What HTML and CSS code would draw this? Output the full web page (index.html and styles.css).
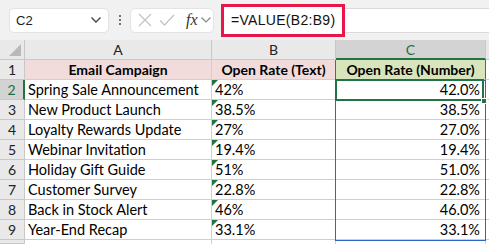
FILE: index.html
```html
<!DOCTYPE html>
<html>
<head>
<meta charset="utf-8">
<link rel="stylesheet" href="styles.css">
</head>
<body>
<div class="app">
  <div class="toolbar">
    <div class="namebox">
      <span class="nb-text">C2</span>
      <svg class="chev" width="12" height="8" viewBox="0 0 12 8"><path d="M1.5 1.5 L6 6 L10.5 1.5" fill="none" stroke="#444" stroke-width="1.4"/></svg>
    </div>
    <div class="dots"><span></span><span></span><span></span></div>
    <div class="fxbox">
      <svg width="16" height="16" viewBox="0 0 16 16"><path d="M2 2 L14 14 M14 2 L2 14" stroke="#c4c4c4" stroke-width="1.3" fill="none"/></svg>
      <svg width="18" height="16" viewBox="0 0 18 16"><path d="M2 8.5 L6.5 13 L16 3" stroke="#c4c4c4" stroke-width="1.3" fill="none"/></svg>
      <span class="fx">fx</span>
      <svg width="12" height="8" viewBox="0 0 12 8"><path d="M1.5 1.5 L6 6 L10.5 1.5" fill="none" stroke="#888" stroke-width="1.2"/></svg>
    </div>
    <div class="formula">
      <div class="formula-hl">=VALUE(B2:B9)</div>
    </div>
  </div>
  <div class="sheet">
    <div class="grid">
      <div class="corner"><span class="tri"></span></div>
      <div class="colh">A</div>
      <div class="colh">B</div>
      <div class="colh sel">C</div>
      <div class="colh last"></div>

      <div class="rowh">1</div>
      <div class="cell hd pink">Email Campaign</div>
      <div class="cell hd pink gr">Open Rate (Text)</div>
      <div class="cell hd green gr">Open Rate (Number)</div>
      <div class="cell last"></div>

      <div class="rowh sel">2</div>
      <div class="cell">Spring Sale Announcement</div>
      <div class="cell txt">42%</div>
      <div class="cell num">42.0%</div>
      <div class="cell last"></div>

      <div class="rowh">3</div>
      <div class="cell">New Product Launch</div>
      <div class="cell txt">38.5%</div>
      <div class="cell num">38.5%</div>
      <div class="cell last"></div>

      <div class="rowh">4</div>
      <div class="cell">Loyalty Rewards Update</div>
      <div class="cell txt">27%</div>
      <div class="cell num">27.0%</div>
      <div class="cell last"></div>

      <div class="rowh">5</div>
      <div class="cell">Webinar Invitation</div>
      <div class="cell txt">19.4%</div>
      <div class="cell num">19.4%</div>
      <div class="cell last"></div>

      <div class="rowh">6</div>
      <div class="cell">Holiday Gift Guide</div>
      <div class="cell txt">51%</div>
      <div class="cell num">51.0%</div>
      <div class="cell last"></div>

      <div class="rowh">7</div>
      <div class="cell">Customer Survey</div>
      <div class="cell txt">22.8%</div>
      <div class="cell num">22.8%</div>
      <div class="cell last"></div>

      <div class="rowh">8</div>
      <div class="cell">Back in Stock Alert</div>
      <div class="cell txt">46%</div>
      <div class="cell num">46.0%</div>
      <div class="cell last"></div>

      <div class="rowh">9</div>
      <div class="cell">Year-End Recap</div>
      <div class="cell txt">33.1%</div>
      <div class="cell num">33.1%</div>
      <div class="cell last"></div>

      <div class="rowh"></div>
      <div class="cell blank"></div>
      <div class="cell blank"></div>
      <div class="cell blank"></div>
      <div class="cell last blank"></div>
    </div>
    <div class="spill"></div>
    <div class="active"><span class="handle"></span></div>
  </div>
</div>
</body>
</html>
```

FILE: styles.css
```css
* { box-sizing: border-box; }
html, body { margin: 0; padding: 0; }
body {
  width: 489px;
  height: 244px;
  overflow: hidden;
  background: #ffffff;
  font-family: "Lato", "Open Sans", sans-serif;
}
.app { display: flex; flex-direction: column; }

.toolbar {
  height: 40px;
  background: #f1f1f1;
  display: flex;
  align-items: center;
  padding-left: 9px;
}
.namebox {
  width: 100px;
  height: 25px;
  background: #fff;
  border: 1px solid #e3e3e3;
  border-radius: 5px;
  display: flex;
  align-items: center;
  justify-content: space-between;
  padding: 0 6px 0 6px;
  font-family: "Liberation Sans", sans-serif;
  font-size: 13px;
  color: #222;
}
.dots {
  width: 21px;
  display: flex;
  flex-direction: column;
  align-items: center;
  gap: 2px;
}
.dots span { width: 2px; height: 2px; background: #444; border-radius: 1px; }
.fxbox {
  width: 84px;
  height: 25px;
  background: #fff;
  border: 1px solid #e3e3e3;
  border-radius: 5px;
  display: flex;
  align-items: center;
  gap: 5px;
  padding-left: 6px;
}
.fx {
  font-family: "Liberation Serif", serif;
  font-style: italic;
  font-size: 16px;
  color: #333;
  margin-left: 5px;
  margin-right: -3px;
}
.formula {
  flex: 1;
  height: 25px;
  margin-left: 9px;
  background: #fff;
  border-top: 1px solid #dadada;
  border-bottom: 1px solid #dadada;
  position: relative;
}
.formula-hl {
  position: absolute;
  left: -2px;
  top: -5px;
  width: 124px;
  height: 33px;
  border: 3px solid #e8174a;
  font-family: "Liberation Sans", sans-serif;
  font-size: 14px;
  letter-spacing: 0.3px;
  color: #111;
  padding: 5px 0 0 7px;
  background: #fff;
}

.sheet { position: relative; }
.grid {
  display: grid;
  grid-template-columns: 25px 187px 124px 150px 3px;
  grid-template-rows: 20px repeat(9, 20px) 4px;
}
.corner {
  background: #e9e9e9;
  border-right: 1px solid #c8c8c8;
  border-bottom: 1px solid #c8c8c8;
  position: relative;
}
.tri {
  position: absolute;
  right: 3px;
  bottom: 3px;
  width: 0; height: 0;
  border-left: 12px solid transparent;
  border-bottom: 12px solid #b9b9b9;
}
.colh {
  background: #e9e9e9;
  border-right: 1px solid #c8c8c8;
  border-bottom: 1px solid #c8c8c8;
  text-align: center;
  font-size: 14px;
  line-height: 19px;
  color: #222;
}
.colh.sel {
  background: #d3d3d3;
  color: #1e6e42;
  border-bottom: 2px solid #217346;
}
.rowh {
  background: #e9e9e9;
  border-right: 1px solid #c8c8c8;
  border-bottom: 1px solid #c8c8c8;
  text-align: center;
  font-size: 14px;
  line-height: 19px;
  color: #222;
}
.rowh.sel {
  background: #d3d3d3;
  color: #1e6e42;
  border-right: 2px solid #217346;
}
.cell {
  border-right: 1px solid #cfcfcf;
  border-bottom: 1px solid #cfcfcf;
  font-size: 14.5px;
  line-height: 19px;
  padding: 0 3px;
  color: #000;
  white-space: nowrap;
  overflow: hidden;
  position: relative;
}
.cell.hd { font-weight: bold; text-align: center; font-size: 14px; }
.cell.gr { border-right-color: #3c7a4f; }
.pink { background: #f2dcdb; }
.green { background: #d8e4bc; }
.num { text-align: right; padding-right: 5px; }
.txt::before {
  content: "";
  position: absolute;
  left: 0; top: 0;
  width: 0; height: 0;
  border-top: 6px solid #217346;
  border-right: 6px solid transparent;
}
.last { border-right: none; }
.blank { border-bottom: none; }

.spill {
  position: absolute;
  left: 335px;
  top: 40px;
  width: 151px;
  height: 161px;
  border: 1px solid #2f64c8;
}
.active {
  position: absolute;
  left: 335px;
  top: 39px;
  width: 149px;
  height: 22px;
  border: 2px solid #217346;
}
.handle {
  position: absolute;
  right: -5px;
  bottom: -5px;
  width: 6px;
  height: 6px;
  background: #217346;
  border: 1px solid #fff;
}
```
